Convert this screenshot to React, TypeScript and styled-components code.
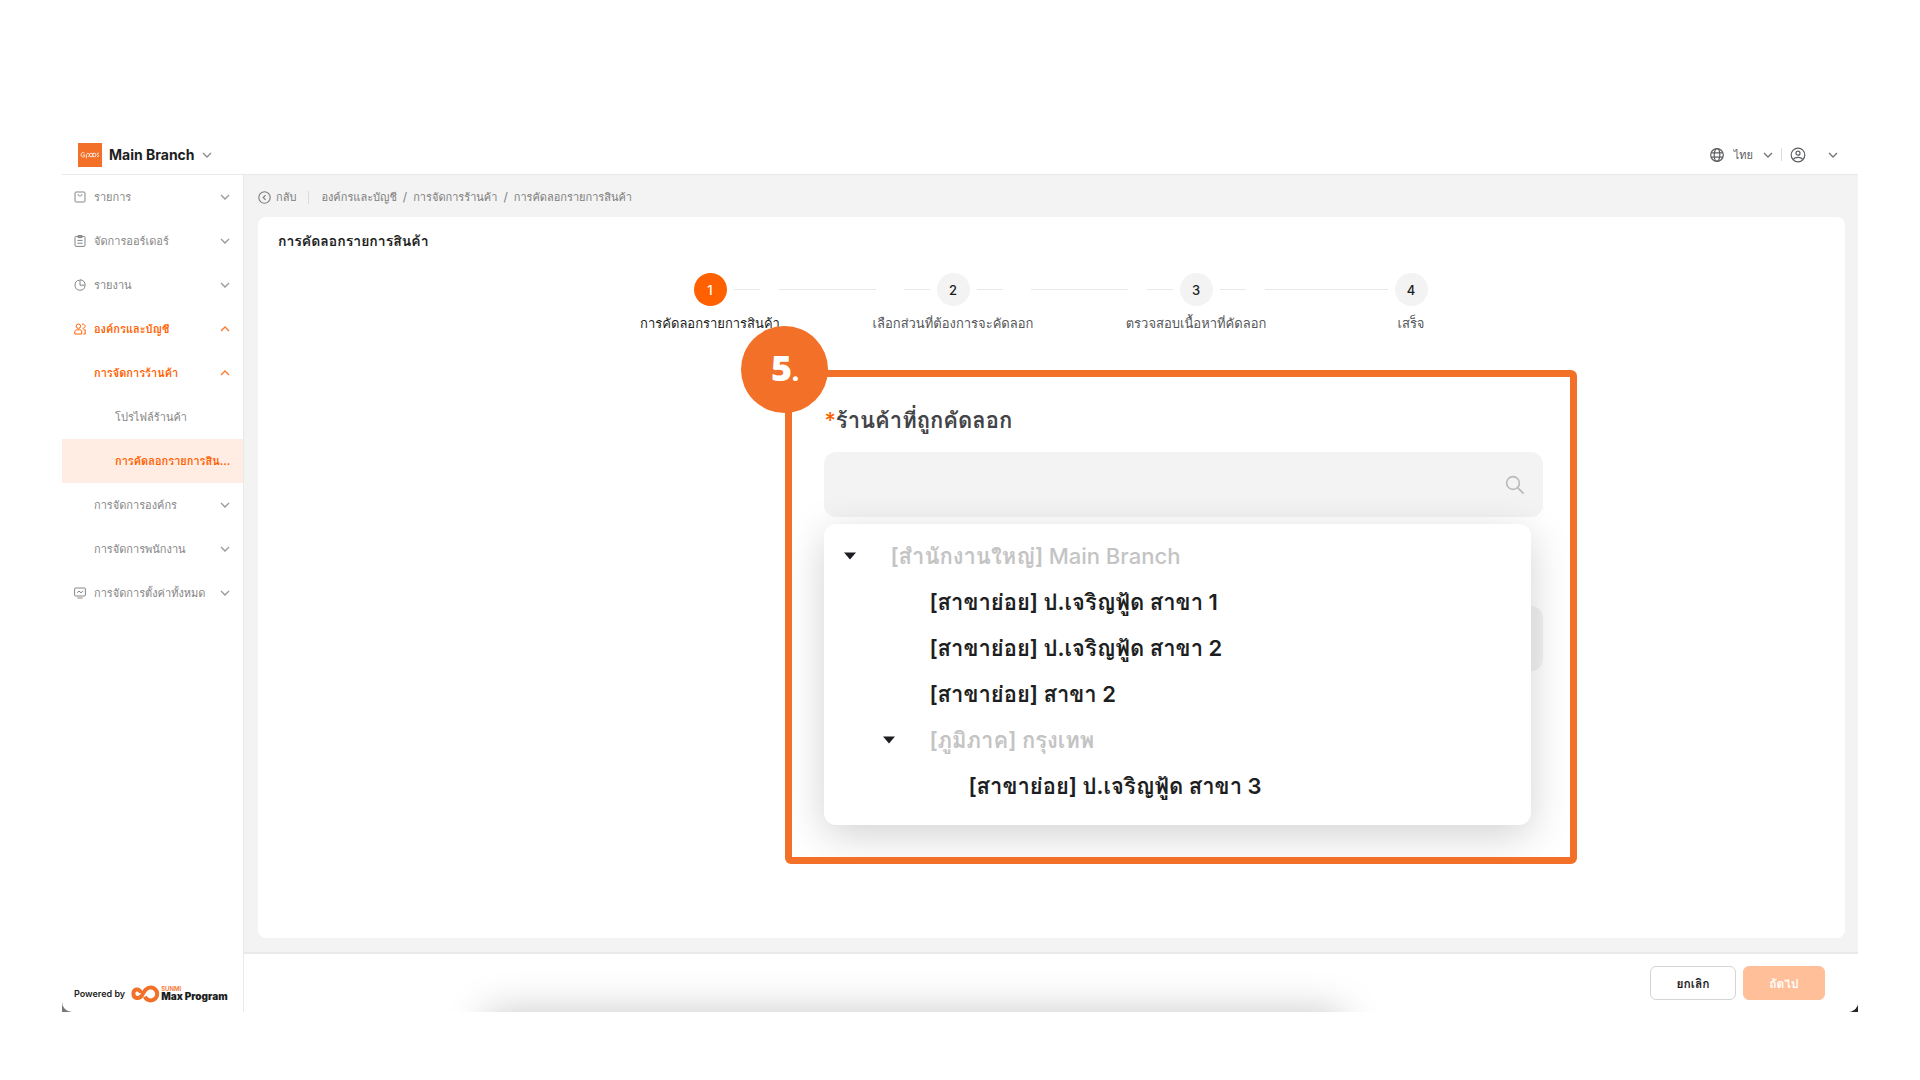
import React from 'react';
import styled, { createGlobalStyle, css } from 'styled-components';

const color = {
  brand: '#ff6000',
  callout: '#f37028',
  text: '#1d1e22',
  muted: '#858585',
  surface: '#f3f3f3',
  line: '#e9e9e9',
};

const GlobalStyle = createGlobalStyle`
  *, *::before, *::after { box-sizing: border-box; }
  body {
    margin: 0;
    background: #fff;
    color: ${color.text};
    font-family: Inter, Loma, "Noto Sans", sans-serif;
    font-size: 12px;
  }
  button, input { font: inherit; color: inherit; }
  ul, ol { list-style: none; margin: 0; padding: 0; }
  a { color: inherit; text-decoration: none; }
`;

const Page = styled.div`
  min-height: 100vh;
  padding: 134px 62px 68px;
  display: flex;
`;

const WindowEdge = styled.div`
  flex: 1;
  display: flex;
  background: linear-gradient(90deg, #777 0, #26262a 50%);
`;

const Window = styled.div`
  flex: 1;
  display: flex;
  flex-direction: column;
  background: #fff;
  border-radius: 0 0 10px 10px;
  overflow: hidden;
`;

const TopBar = styled.header`
  height: 41px;
  display: flex;
  align-items: center;
  justify-content: space-between;
  padding: 1px 20px 0 16px;
  border-bottom: 1px solid ${color.line};
`;

const PlainButton = styled.button`
  border: 0;
  padding: 0;
  background: none;
  display: flex;
  align-items: center;
  cursor: pointer;
`;

const BranchButton = styled(PlainButton)`
  gap: 7px;
  font-size: 14px;
  font-weight: 700;
`;

const BrandTile = styled.span`
  width: 24px;
  height: 24px;
  display: flex;
  align-items: center;
  justify-content: center;
  background: ${color.callout};
`;

const TopActions = styled.div`
  display: flex;
  align-items: center;
  gap: 8px;
  color: #5b5d61;
`;

const TopButton = styled(PlainButton)<{ $gap: number }>`
  gap: ${p => p.$gap}px;
  font-size: 11px;
`;

const Separator = styled.span`
  width: 1px;
  height: 13px;
  background: #dcdcdc;
`;

const Columns = styled.div`
  flex: 1;
  display: flex;
`;

const Sidebar = styled.aside`
  width: 182px;
  flex: none;
  display: flex;
  flex-direction: column;
  justify-content: space-between;
  border-right: 1px solid ${color.line};
`;

const NavLink = styled.a<{ $level: number; $active?: boolean; $current?: boolean }>`
  height: 44px;
  display: flex;
  align-items: center;
  gap: 8px;
  padding: 0 13px 0 ${p => [12, 32, 53][p.$level]}px;
  font-size: 11px;
  line-height: 24px;
  font-weight: ${p => (p.$active ? 600 : 500)};
  color: ${p => (p.$active ? color.brand : color.muted)};
  ${p => p.$current && css`background: #ffede3;`}
`;

const NavText = styled.span`
  flex: 1;
  white-space: nowrap;
`;

const Powered = styled.footer`
  display: flex;
  align-items: center;
  gap: 6px;
  padding: 0 12px 9px;
  font-size: 9px;
  font-weight: 600;
  line-height: 16px;
  white-space: nowrap;
`;

const PoweredLogo = styled.span`
  display: flex;
  align-items: center;
  gap: 1px;
`;

const PoweredName = styled.span`
  display: flex;
  flex-direction: column;
  font-size: 10px;
  line-height: 10px;
  font-weight: 900;
`;

const PoweredVendor = styled.span`
  font-size: 6px;
  line-height: 4px;
  font-weight: 600;
  color: ${color.callout};
`;

const Main = styled.main`
  flex: 1;
  min-width: 0;
  display: flex;
  flex-direction: column;
  background: ${color.surface};
`;

const Crumbs = styled.nav`
  height: 42px;
  display: flex;
  align-items: center;
  gap: 12px;
  padding: 2px 14px 0;
  font-size: 11px;
  line-height: 24px;
  color: #7d7d7d;
`;

const BackLink = styled.a`
  display: flex;
  align-items: center;
  gap: 5px;
  font-weight: 500;
`;

const CrumbList = styled.ol`
  display: flex;
  li + li::before {
    content: '/';
    margin: 0 6px;
    font-size: 12px;
  }
`;

const Card = styled.section`
  flex: 1;
  margin: 0 13px 14px 14px;
  padding: 12px 20px 24px;
  border-radius: 8px;
  background: #fff;
`;

const Title = styled.h1`
  margin: 0;
  font-size: 14px;
  font-weight: 700;
  line-height: 24px;
`;

const Stepper = styled.ol`
  display: flex;
  justify-content: center;
  padding: 20px 0 0 18px;
`;

const Step = styled.li`
  width: 33px;
  display: flex;
  flex-direction: column;
  align-items: center;
  white-space: nowrap;
`;

const StepDot = styled.span<{ $active?: boolean }>`
  width: 33px;
  height: 33px;
  border-radius: 50%;
  display: flex;
  align-items: center;
  justify-content: center;
  font-size: 13px;
  font-weight: 500;
  background: ${p => (p.$active ? color.brand : color.surface)};
  color: ${p => (p.$active ? '#fff' : color.text)};
`;

const StepLabel = styled.span<{ $active?: boolean }>`
  margin-top: 5px;
  font-size: 13px;
  line-height: 24px;
  color: ${p => (p.$active ? color.text : '#55575b')};
`;

const Connector = styled.li`
  height: 33px;
  display: flex;
  align-items: center;
  padding: 0 7px;
`;

const Dash = styled.span<{ $width: number; $gap: number }>`
  width: ${p => p.$width}px;
  height: 1px;
  margin-right: ${p => p.$gap}px;
  background: #e8e8e8;
`;

const Callout = styled.div`
  position: relative;
  width: 51.2%;
  margin: 35px 0 0 32.8%;
`;

const CalloutFrame = styled.div`
  border: 7px solid ${color.callout};
  border-radius: 6px;
  padding: 23px 27px 186px 32px;
  overflow: hidden;
`;

const CalloutBadge = styled.span`
  position: absolute;
  z-index: 2;
  top: -44px;
  left: -44px;
  width: 87px;
  height: 87px;
  border-radius: 50%;
  display: flex;
  align-items: baseline;
  justify-content: center;
  background: ${color.callout};
  color: #fff;
  font-family: "Open Sans", "Noto Sans", sans-serif;
  font-size: 36px;
  font-weight: 800;
  line-height: 84px;
  small { font-size: 24px; line-height: 24px; }
`;

const Form = styled.form`
  display: flex;
  flex-direction: column;
`;

const FieldLabel = styled.label`
  font-size: 22px;
  font-weight: 600;
  line-height: 40px;
  color: #434447;
  span { color: ${color.brand}; font-weight: 500; }
`;

const Field = styled.div`
  position: relative;
  display: flex;
  margin-top: 12px;
`;

const FieldInput = styled.input`
  flex: 1;
  min-width: 0;
  height: 65px;
  padding: 0 56px 0 20px;
  border: 0;
  border-radius: 12px;
  outline: none;
  font-size: 22px;
  background: ${color.surface};
`;

const TargetField = styled(Field)`
  margin-top: 89px;
`;

const SearchIcon = styled.svg`
  position: absolute;
  right: 18px;
  top: 23px;
`;

const Dropdown = styled.ul`
  position: absolute;
  z-index: 1;
  top: 72px;
  left: 0;
  right: 12px;
  padding: 9px 20px 16px;
  border-radius: 12px;
  background: #fff;
  box-shadow: 0 10px 40px rgba(0, 0, 0, 0.18);
`;

const TreeRow = styled.li<{ $level: number; $disabled?: boolean }>`
  height: 46px;
  display: flex;
  align-items: center;
  padding-left: ${p => p.$level * 39}px;
  font-size: 22px;
  font-weight: 600;
  line-height: 46px;
  white-space: pre;
  color: ${p => (p.$disabled ? '#c4c4c4' : color.text)};
`;

const TreeName = styled.span`
  font-weight: 500;
`;

const TreeToggle = styled.span`
  width: 46px;
  display: flex;
  color: ${color.text};
`;

const ActionBar = styled.footer`
  position: relative;
  height: 60px;
  display: flex;
  align-items: center;
  justify-content: flex-end;
  gap: 7px;
  padding: 0 33px 0 0;
  border-top: 2px solid ${color.line};
  background: #fff;
  overflow: hidden;
  &::after {
    content: '';
    position: absolute;
    top: 100%;
    left: 15%;
    right: 32%;
    height: 60px;
    box-shadow: 0 0 40px rgba(0, 0, 0, 0.22);
  }
`;

const ActionButton = styled.button<{ $primary?: boolean }>`
  height: 34px;
  min-width: ${p => (p.$primary ? 82 : 86)}px;
  border: 1px solid ${p => (p.$primary ? '#ffbf99' : '#d4d4d4')};
  border-radius: 6px;
  background: ${p => (p.$primary ? '#ffbf99' : '#fff')};
  color: ${p => (p.$primary ? '#fff' : color.text)};
  font-size: 12px;
  font-weight: 600;
`;

const ChevronIcon = styled.svg`
  flex: none;
  opacity: 0.85;
`;

const Chevron = ({ up }: { up?: boolean }) => (
  <ChevronIcon width="10" height="10" viewBox="0 0 10 10" fill="none" stroke="currentColor" strokeWidth="1.3" aria-hidden="true">
    <path d={up ? 'M1 7l4-4 4 4' : 'M1 3l4 4 4-4'} />
  </ChevronIcon>
);

const BranchChevron = styled.span`
  display: flex;
  color: #77797d;
`;

const iconPaths = {
  list: <><rect x="1" y="1" width="10" height="10" rx="1" /><path d="M4 3.2c0 2.4 4 2.4 4 0" /></>,
  order: <><rect x="1" y="1.4" width="10" height="10" rx="1" /><path d="M4 .6h4v2H4zM3.4 5.4h5.2M3.4 8.2h5.2" /></>,
  report: <path d="M5.6 1.2A5 5 0 1 0 11 6.8M6 .8v5.4h5.2C11.2 3 9 .8 6 .8z" />,
  org: (
    <>
      <circle cx="4.4" cy="3.2" r="2.2" />
      <path d="M.8 11V9c0-1.4 1-2.2 2.4-2.2h2.4C7 6.800 7.800 7.600 7.800 9v2zM8 1.200h1.600c2.200.8 1.800 3.400 0 4H8.400M9.400 6.800h1.800V11H9.400" />
    </>
  ),
  settings: <><rect x=".6" y="1" width="10.800" height="8" rx="1" /><path d="M3 5.800l2-1.800 2 1.800L9.200 4M3.400 11h5.200" /></>,
};

const NavIcon = ({ name }: { name: keyof typeof iconPaths }) => (
  <svg width="12" height="12" viewBox="0 0 12 12" fill="none" stroke="currentColor" strokeWidth="1" aria-hidden="true">
    {iconPaths[name]}
  </svg>
);

type NavItem = {
  text: string;
  level: number;
  icon?: keyof typeof iconPaths;
  open?: boolean;
  leaf?: boolean;
  current?: boolean;
};

const navItems: NavItem[] = [
  { text: 'รายการ', level: 0, icon: 'list' },
  { text: 'จัดการออร์เดอร์', level: 0, icon: 'order' },
  { text: 'รายงาน', level: 0, icon: 'report' },
  { text: 'องค์กรและบัญชี', level: 0, icon: 'org', open: true },
  { text: 'การจัดการร้านค้า', level: 1, open: true },
  { text: 'โปรไฟล์ร้านค้า', level: 2, leaf: true },
  { text: 'การคัดลอกรายการสิน...', level: 2, leaf: true, current: true },
  { text: 'การจัดการองค์กร', level: 1 },
  { text: 'การจัดการพนักงาน', level: 1 },
  { text: 'การจัดการตั้งค่าทั้งหมด', level: 0, icon: 'settings' },
];

const steps: { label: string; dashes: [number, number][] }[] = [
  { label: 'การคัดลอกรายการสินค้า', dashes: [[26, 19], [97, 28], [26, 0]] },
  { label: 'เลือกส่วนที่ต้องการจะคัดลอก', dashes: [[26, 28], [97, 19], [26, 0]] },
  { label: 'ตรวจสอบเนื้อหาที่คัดลอก', dashes: [[26, 19], [123, 0]] },
  { label: 'เสร็จ', dashes: [] },
];

type Branch = { text: string; name?: string; level: number; group?: boolean };

const branches: Branch[] = [
  { text: '[สำนักงานใหญ่] ', name: 'Main Branch', level: 0, group: true },
  { text: '[สาขาย่อย] ป.เจริญฟู้ด สาขา 1', level: 1 },
  { text: '[สาขาย่อย] ป.เจริญฟู้ด สาขา 2', level: 1 },
  { text: '[สาขาย่อย] สาขา 2', level: 1 },
  { text: '[ภูมิภาค] กรุงเทพ', level: 1, group: true },
  { text: '[สาขาย่อย] ป.เจริญฟู้ด สาขา 3', level: 2 },
];

const BrandMark = () => (
  <BrandTile>
    <svg width="20" height="8" viewBox="0 0 20 8" fill="none" stroke="#fff" strokeWidth="0.8" aria-label="GPOS">
      <path d="M4.600 2C2.800.8 1 2 1 3.800s1.800 2.800 3.600 1.800V4H3M6.400 7.400V3.400a1.600 1.600 0 1 1 1.400 2.200" />
      <circle cx="11.200" cy="4" r="1.800" />
      <circle cx="14.200" cy="4" r="1.800" />
      <path d="M19 2.200c-1.600-.6-2.400.8-1.200 1.600 1.600.6 1 2.200-.8 1.800" />
    </svg>
  </BrandTile>
);

export default function App() {
  return (
    <>
      <GlobalStyle />
      <Page>
        <WindowEdge>
          <Window>
            <TopBar>
              <BranchButton type="button">
                <BrandMark />
                Main Branch
                <BranchChevron><Chevron /></BranchChevron>
              </BranchButton>
              <TopActions>
                <TopButton type="button" $gap={10}>
                  <svg width="14" height="14" viewBox="0 0 14 14" fill="none" stroke="currentColor" strokeWidth="1.2" aria-hidden="true">
                    <circle cx="7" cy="7" r="6.3" />
                    <ellipse cx="7" cy="7" rx="2.8" ry="6.3" />
                    <path d="M1.200 4.800h11.600M1.200 9.200h11.600" />
                  </svg>
                  ไทย
                  <Chevron />
                </TopButton>
                <Separator />
                <TopButton type="button" $gap={22} aria-label="บัญชี">
                  <svg width="16" height="16" viewBox="0 0 16 16" fill="none" stroke="currentColor" strokeWidth="1.2" aria-hidden="true">
                    <circle cx="8" cy="8" r="6.8" />
                    <circle cx="8" cy="6.2" r="2" />
                    <path d="M3.400 12.600c1-3 8.200-3 9.200 0" />
                  </svg>
                  <Chevron />
                </TopButton>
              </TopActions>
            </TopBar>

            <Columns>
              <Sidebar>
                <nav>
                  <ul>
                    {navItems.map(item => (
                      <li key={item.text}>
                        <NavLink
                          href="#"
                          $level={item.level}
                          $active={item.open || item.current}
                          $current={item.current}
                          aria-current={item.current ? 'page' : undefined}
                        >
                          {item.icon && <NavIcon name={item.icon} />}
                          <NavText>{item.text}</NavText>
                          {!item.leaf && <Chevron up={item.open} />}
                        </NavLink>
                      </li>
                    ))}
                  </ul>
                </nav>
                <Powered>
                  Powered by
                  <PoweredLogo>
                    <svg width="29" height="18" viewBox="0 0 29 18" fill="none" stroke={color.callout} strokeWidth="4" aria-hidden="true">
                      <path d="M9.800 8C10 4.200 2.400 2.600 2.400 8.400c0 6 6.600 5.600 8.800 1.600 2.400-4.400 4-7.400 8.600-7.400a6.400 6.400 0 1 1 0 12.800c-3 0-4.800-1.400-6-3.600" />
                    </svg>
                    <PoweredName>
                      <PoweredVendor>SUNMI</PoweredVendor>
                      Max Program
                    </PoweredName>
                  </PoweredLogo>
                </Powered>
              </Sidebar>

              <Main>
                <Crumbs>
                  <BackLink href="#">
                    <svg width="13" height="13" viewBox="0 0 13 13" fill="none" stroke="currentColor" strokeWidth="1.1" aria-hidden="true">
                      <circle cx="6.5" cy="6.5" r="5.7" />
                      <path d="M7.600 4.200L5.200 6.500l2.400 2.300" />
                    </svg>
                    กลับ
                  </BackLink>
                  <Separator />
                  <CrumbList>
                    <li><a href="#">องค์กรและบัญชี</a></li>
                    <li><a href="#">การจัดการร้านค้า</a></li>
                    <li>การคัดลอกรายการสินค้า</li>
                  </CrumbList>
                </Crumbs>

                <Card>
                  <Title>การคัดลอกรายการสินค้า</Title>
                  <Stepper>
                    {steps.map((step, i) => (
                      <React.Fragment key={step.label}>
                        <Step aria-current={i === 0 ? 'step' : undefined}>
                          <StepDot $active={i === 0}>{i + 1}</StepDot>
                          <StepLabel $active={i === 0}>{step.label}</StepLabel>
                        </Step>
                        {step.dashes.length > 0 && (
                          <Connector aria-hidden="true">
                            {step.dashes.map(([width, gap], d) => (
                              <Dash key={d} $width={width} $gap={gap} />
                            ))}
                          </Connector>
                        )}
                      </React.Fragment>
                    ))}
                  </Stepper>

                  <Callout>
                    <CalloutBadge>5<small>.</small></CalloutBadge>
                    <CalloutFrame>
                      <Form>
                        <FieldLabel htmlFor="source-store"><span>*</span>ร้านค้าที่ถูกคัดลอก</FieldLabel>
                        <Field>
                          <FieldInput id="source-store" type="text" />
                          <SearchIcon width="20" height="20" viewBox="0 0 20 20" fill="none" stroke="#b9b9b9" strokeWidth="1.6" aria-hidden="true">
                            <circle cx="8" cy="8" r="6.4" />
                            <path d="M12.600 12.600L18.600 18.600" />
                          </SearchIcon>
                          <Dropdown>
                            {branches.map(branch => (
                              <TreeRow key={branch.text} $level={branch.level} $disabled={branch.group}>
                                <TreeToggle>
                                  {branch.group && (
                                    <svg width="12" height="8" viewBox="0 0 12 8" fill="currentColor" aria-hidden="true">
                                      <path d="M0 .5h12L6 7.500z" />
                                    </svg>
                                  )}
                                </TreeToggle>
                                <span>
                                  {branch.text}
                                  {branch.name && <TreeName>{branch.name}</TreeName>}
                                </span>
                              </TreeRow>
                            ))}
                          </Dropdown>
                        </Field>
                        <TargetField>
                          <FieldInput type="text" aria-labelledby="source-store" />
                        </TargetField>
                      </Form>
                    </CalloutFrame>
                  </Callout>
                </Card>

                <ActionBar>
                  <ActionButton type="button">ยกเลิก</ActionButton>
                  <ActionButton type="button" $primary>ถัดไป</ActionButton>
                </ActionBar>
              </Main>
            </Columns>
          </Window>
        </WindowEdge>
      </Page>
    </>
  );
}
